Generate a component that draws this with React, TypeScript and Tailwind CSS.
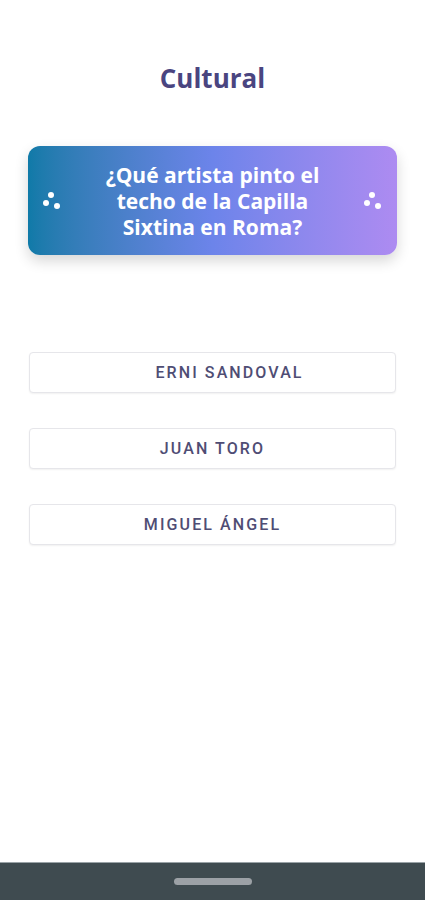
const answers = [
  { label: "ERNI SANDOVAL", shift: true },
  { label: "JUAN TORO", shift: false },
  { label: "MIGUEL ÁNGEL", shift: false },
]

function Dots() {
  return (
    <svg width="20" height="20" viewBox="0 0 20 20" className="shrink-0">
      <circle cx="9" cy="4" r="3" fill="white" />
      <circle cx="4" cy="12" r="3" fill="white" />
      <circle cx="15" cy="15" r="3" fill="white" />
    </svg>
  )
}

export default function App() {
  return (
    <div className="flex h-[900px] w-full flex-col bg-white">
      <div className="flex flex-1 flex-col px-[28px]">
        <h1 className="mt-[60px] text-center font-['Open_Sans',sans-serif] text-[26px] font-bold leading-[36px] text-[#4a4580]">
          Cultural
        </h1>

        <div className="mt-[50px] flex h-[109px] items-center justify-between rounded-[12px] bg-gradient-to-r from-[#0f7aa8] via-[#6c84ea] to-[#ad8bf1] pl-[14px] pr-[14px] shadow-[0_6px_14px_rgba(0,0,0,0.16)]">
          <Dots />
          <p className="text-center font-['Open_Sans',sans-serif] text-[21px] font-bold leading-[26px] text-white">
            ¿Qué artista pinto el
            <br />
            techo de la Capilla
            <br />
            Sixtina en Roma?
          </p>
          <Dots />
        </div>

        <div className="mt-[97px] flex flex-col gap-[35px] px-px">
          {answers.map((a) => (
            <button
              key={a.label}
              className={
                "h-[41px] w-full rounded-[4px] border border-[#e6e6ea] bg-white font-['Roboto',sans-serif] text-[16px] font-medium tracking-[2.1px] text-[#4f4d74] shadow-[0_1px_2px_rgba(0,0,0,0.06)] " +
                (a.shift ? "pl-[34px]" : "")
              }
            >
              {a.label}
            </button>
          ))}
        </div>
      </div>

      <div className="flex h-[38px] items-center justify-center border-t border-[#9aa3a7] bg-[#3f4b50]">
        <div className="h-[7px] w-[78px] rounded-full bg-[#9ca1a6]" />
      </div>
    </div>
  )
}
